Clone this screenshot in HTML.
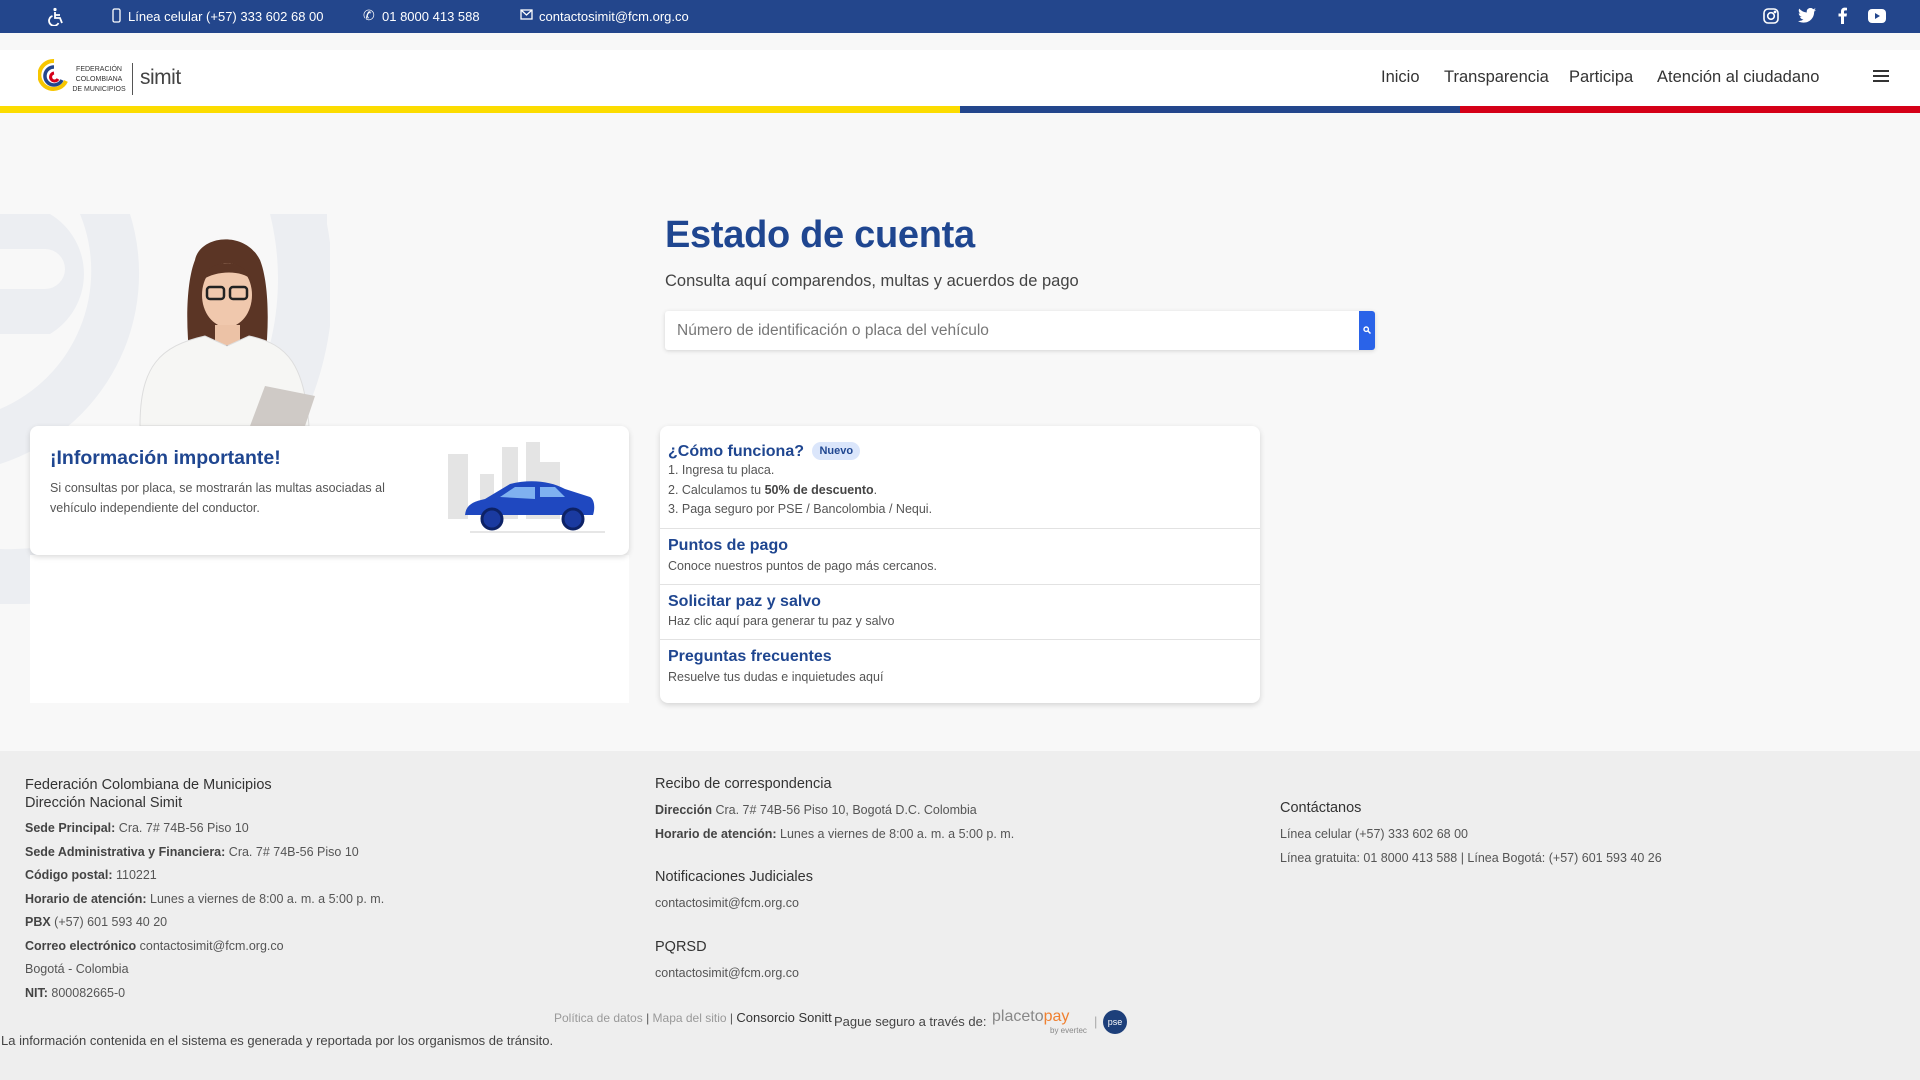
<!DOCTYPE html>
<html><head><meta charset="utf-8">
<style>
*{margin:0;padding:0;box-sizing:border-box}
body{width:1920px;height:1080px;overflow:hidden;background:#f8f8f8;font-family:"Liberation Sans",sans-serif;color:#333;position:relative}
.a{position:absolute;white-space:nowrap}
.top{position:absolute;left:0;top:0;width:1920px;height:33px;background:#23468c;color:#fff;font-size:13px}
.hdr{position:absolute;left:0;top:50px;width:1920px;height:56px;background:#fff}
.nav{font-size:16.5px;color:#333;top:68px}
.blue{color:#1f4690}
.card{position:absolute;background:#fff;border-radius:8px;box-shadow:0 2px 6px rgba(0,0,0,.15)}
.rt{font-size:16px;font-weight:bold;color:#1f4690}
.rd{font-size:12.5px;color:#555}
.f{font-size:12.5px;color:#555}
.f b{color:#444}
.fh{font-size:14.5px;color:#333}
</style></head><body>
<div class="top">
 <svg class="a" style="left:48px;top:7px" width="18" height="19" viewBox="0 0 18 19" fill="none" stroke="#fff" stroke-width="1.8"><circle cx="7" cy="2.5" r="1.6" fill="#fff" stroke="none"/><path d="M7 5v6h5l2 5M7 8h5M4.5 9a5 5 0 1 0 6 7"/></svg>
 <svg class="a" style="left:112px;top:8px" width="9" height="15" viewBox="0 0 9 15"><rect x="1" y="1" width="7" height="13" rx="1.5" fill="none" stroke="#fff" stroke-width="1.3"/></svg>
 <span class="a" style="left:128px;top:9px">Línea celular (+57) 333 602 68 00</span>
 <span class="a" style="left:363px;top:7px;font-size:14px">✆</span>
 <span class="a" style="left:382px;top:9px">01 8000 413 588</span>
 <svg class="a" style="left:520px;top:9px" width="13" height="11" viewBox="0 0 13 11"><rect x="1" y="1" width="11" height="9" fill="none" stroke="#fff" stroke-width="1.3"/><path d="M1 1l5.5 5L12 1" fill="none" stroke="#fff" stroke-width="1.3"/></svg>
 <span class="a" style="left:539px;top:9px">contactosimit@fcm.org.co</span>
 <svg class="a" style="left:1763px;top:8px" width="16" height="16" viewBox="0 0 16 16" fill="none" stroke="#fff" stroke-width="1.6"><rect x="1" y="1" width="14" height="14" rx="4"/><circle cx="8" cy="8" r="3.3"/><circle cx="12" cy="4" r=".6" fill="#fff"/></svg>
 <svg class="a" style="left:1798px;top:8px" width="18" height="15" viewBox="0 0 24 20"><path fill="#fff" d="M24 2.4a10 10 0 0 1-2.8.8A5 5 0 0 0 23.3.4a10 10 0 0 1-3.1 1.2A4.9 4.9 0 0 0 11.8 6 14 14 0 0 1 1.7.9a4.9 4.9 0 0 0 1.5 6.6A5 5 0 0 1 1 6.9a4.9 4.9 0 0 0 3.9 4.9 5 5 0 0 1-2.2.1 4.9 4.9 0 0 0 4.6 3.4A9.9 9.9 0 0 1 0 17.3 14 14 0 0 0 7.5 19.5c9.1 0 14-7.5 14-14v-.6A10 10 0 0 0 24 2.4z"/></svg>
 <svg class="a" style="left:1838px;top:7px" width="9" height="17" viewBox="0 0 9 17"><path fill="#fff" d="M6 17V9.5h2.5L9 6.5H6V4.8c0-.9.3-1.4 1.5-1.4H9V.7A20 20 0 0 0 6.8.6C4.6.6 3 1.9 3 4.4v2.1H.5v3H3V17z"/></svg>
 <svg class="a" style="left:1868px;top:9px" width="18" height="14" viewBox="0 0 18 14"><rect width="18" height="14" rx="4" fill="#fff"/><path d="M7 4l5 3-5 3z" fill="#23468c"/></svg>
</div>
<div class="hdr"></div>
<svg class="a" style="left:38px;top:57px" width="32" height="40" viewBox="0 0 30 40"><path d="M15 4a14 14 0 1 0 12 20" fill="none" stroke="#f7c600" stroke-width="4"/><path d="M15 10a9 9 0 1 0 8 13" fill="none" stroke="#23468c" stroke-width="3.5"/><path d="M15 16a4 4 0 1 0 4 6" fill="none" stroke="#d50018" stroke-width="3"/></svg>
<div class="a" style="left:72px;top:65px;font-size:7px;line-height:10px;color:#333;text-align:center;width:54px">FEDERACIÓN<br>COLOMBIANA<br>DE MUNICIPIOS</div>
<div class="a" style="left:132px;top:63px;width:1px;height:32px;background:#555"></div>
<div class="a" style="left:140px;top:66px;font-size:21px;color:#444;letter-spacing:-.5px">simit</div>
<span class="a nav" style="left:1381px">Inicio</span>
<span class="a nav" style="left:1444px">Transparencia</span>
<span class="a nav" style="left:1569px">Participa</span>
<span class="a nav" style="left:1657px">Atención al ciudadano</span>
<div class="a" style="left:1873px;top:70px;width:16px;height:2px;background:#333;box-shadow:0 5px 0 #333,0 10px 0 #333"></div>
<div class="a" style="left:0;top:106px;width:960px;height:7px;background:#fcdc00"></div>
<div class="a" style="left:960px;top:106px;width:500px;height:7px;background:#23468c"></div>
<div class="a" style="left:1460px;top:106px;width:460px;height:7px;background:#d50018"></div>

<svg class="a" style="left:0;top:214px" width="330" height="390" viewBox="0 0 330 390"><path d="M0 0h50a70 70 0 0 1 0 120H0v-45h45a20 20 0 0 0 0-40H0z" fill="#eceef2"/><path d="M80 0h50A200 200 0 0 1 0 250v-55A150 150 0 0 0 80 0z" fill="#eceef2"/><path d="M270 0h57v10A320 320 0 0 1 0 390v-55A270 270 0 0 0 270 0z" fill="#eceef2"/></svg>
<svg class="a" style="left:130px;top:230px" width="190" height="196" viewBox="0 0 190 196"><path d="M65 30c5-25 50-30 65 0 8 20 10 60 5 100H60c-5-40-3-80 5-100z" fill="#5b3525"/><ellipse cx="97" cy="65" rx="25" ry="32" fill="#f0c8ad"/><path d="M72 50c5-20 40-25 50 0-10-10-35-10-50 0z" fill="#5b3525"/><rect x="77" y="57" width="17" height="12" rx="3" fill="none" stroke="#222" stroke-width="2.5"/><rect x="100" y="57" width="17" height="12" rx="3" fill="none" stroke="#222" stroke-width="2.5"/><path d="M85 95h25v20H85z" fill="#ecc2a6"/><path d="M10 196c0-60 20-80 65-90l22 10 22-10c40 8 55 30 60 90z" fill="#f6f6f4" stroke="#ddd"/><path d="M120 196l15-40 50 10-10 30z" fill="#cfcac6"/></svg>

<div class="a blue" style="left:665px;top:214px;font-size:38px;font-weight:bold;letter-spacing:-.3px">Estado de cuenta</div>
<div class="a" style="left:665px;top:272px;font-size:16.5px;color:#444">Consulta aquí comparendos, multas y acuerdos de pago</div>
<div class="a" style="left:665px;top:311px;width:710px;height:39px;background:#fff;box-shadow:0 1px 4px rgba(0,0,0,.15);border-radius:3px"></div>
<span class="a" style="left:677px;top:322px;font-size:15.5px;color:#777">Número de identificación o placa del vehículo</span>
<div class="a" style="left:1359px;top:311px;width:16px;height:39px;background:#2a63e8;border-radius:0 3px 3px 0"></div>
<svg class="a" style="left:1363px;top:326px" width="8" height="8" viewBox="0 0 8 8"><circle cx="3.2" cy="3.2" r="2.2" fill="none" stroke="#fff" stroke-width="1.4"/><path d="M5 5l2.5 2.5" stroke="#fff" stroke-width="1.5"/></svg>

<div class="a" style="left:30px;top:555px;width:599px;height:148px;background:#fff"></div>
<div class="card" style="left:30px;top:426px;width:599px;height:129px"></div>
<div class="a blue" style="left:50px;top:447px;font-size:19.5px;font-weight:bold">¡Información importante!</div>
<div class="a" style="left:50px;top:478px;font-size:12.5px;color:#555;line-height:20px">Si consultas por placa, se mostrarán las multas asociadas al<br>vehículo independiente del conductor.</div>
<svg class="a" style="left:440px;top:442px" width="175" height="92" viewBox="0 0 175 92"><g fill="#e4e4e4"><rect x="8" y="12" width="20" height="65"/><rect x="40" y="32" width="14" height="45"/><rect x="62" y="5" width="16" height="72"/><rect x="86" y="0" width="14" height="77"/><rect x="100" y="20" width="20" height="57"/></g><path d="M30 90h135" stroke="#ccc"/><path d="M25 75c0-10 5-15 20-18l25-15c20-5 40-3 55 5l25 8c5 3 5 12 3 18H25z" fill="#1f48c0"/><path d="M60 55l15-10h20v12z M100 45h15l10 10h-25z" fill="#7fb1f0"/><circle cx="52" cy="77" r="10" fill="#1a3aa0" stroke="#0d2266" stroke-width="3"/><circle cx="133" cy="77" r="10" fill="#1a3aa0" stroke="#0d2266" stroke-width="3"/></svg>

<div class="card" style="left:660px;top:426px;width:600px;height:277px"></div>
<div class="a" style="left:660px;top:528px;width:600px;height:1px;background:#e2e2e2"></div>
<div class="a" style="left:660px;top:584px;width:600px;height:1px;background:#e2e2e2"></div>
<div class="a" style="left:660px;top:639px;width:600px;height:1px;background:#e2e2e2"></div>
<span class="a rt" style="left:668px;top:443px">¿Cómo funciona? <span style="background:#dbe6fb;color:#1f4690;font-size:11px;font-weight:bold;padding:3px 7px;border-radius:9px;margin-left:4px;vertical-align:2px">Nuevo</span></span>
<span class="a rd" style="left:668px;top:463px">1. Ingresa tu placa.</span>
<span class="a rd" style="left:668px;top:483px">2. Calculamos tu <b style="color:#444">50% de descuento</b>.</span>
<span class="a rd" style="left:668px;top:502px">3. Paga seguro por PSE / Bancolombia / Nequi.</span>
<span class="a rt" style="left:668px;top:537px">Puntos de pago</span>
<span class="a rd" style="left:668px;top:559px">Conoce nuestros puntos de pago más cercanos.</span>
<span class="a rt" style="left:668px;top:593px">Solicitar paz y salvo</span>
<span class="a rd" style="left:668px;top:614px">Haz clic aquí para generar tu paz y salvo</span>
<span class="a rt" style="left:668px;top:648px">Preguntas frecuentes</span>
<span class="a rd" style="left:668px;top:670px">Resuelve tus dudas e inquietudes aquí</span>

<div class="a" style="left:0;top:751px;width:1920px;height:329px;background:#eeeeee"></div>
<div class="a fh" style="left:25px;top:776px;line-height:18px">Federación Colombiana de Municipios<br>Dirección Nacional Simit</div>
<span class="a f" style="left:25px;top:821px"><b>Sede Principal:</b> Cra. 7# 74B-56 Piso 10</span>
<span class="a f" style="left:25px;top:845px"><b>Sede Administrativa y Financiera:</b> Cra. 7# 74B-56 Piso 10</span>
<span class="a f" style="left:25px;top:868px"><b>Código postal:</b> 110221</span>
<span class="a f" style="left:25px;top:892px"><b>Horario de atención:</b> Lunes a viernes de 8:00 a. m. a 5:00 p. m.</span>
<span class="a f" style="left:25px;top:915px"><b>PBX</b> (+57) 601 593 40 20</span>
<span class="a f" style="left:25px;top:939px"><b>Correo electrónico</b> contactosimit@fcm.org.co</span>
<span class="a f" style="left:25px;top:962px">Bogotá - Colombia</span>
<span class="a f" style="left:25px;top:986px"><b>NIT:</b> 800082665-0</span>

<span class="a fh" style="left:655px;top:776px">Recibo de correspondencia</span>
<span class="a f" style="left:655px;top:803px"><b>Dirección</b> Cra. 7# 74B-56 Piso 10, Bogotá D.C. Colombia</span>
<span class="a f" style="left:655px;top:827px"><b>Horario de atención:</b> Lunes a viernes de 8:00 a. m. a 5:00 p. m.</span>
<span class="a fh" style="left:655px;top:869px">Notificaciones Judiciales</span>
<span class="a f" style="left:655px;top:896px">contactosimit@fcm.org.co</span>
<span class="a fh" style="left:655px;top:939px">PQRSD</span>
<span class="a f" style="left:655px;top:966px">contactosimit@fcm.org.co</span>

<span class="a fh" style="left:1280px;top:800px">Contáctanos</span>
<span class="a f" style="left:1280px;top:827px">Línea celular (+57) 333 602 68 00</span>
<span class="a f" style="left:1280px;top:851px">Línea gratuita: 01 8000 413 588 | Línea Bogotá: (+57) 601 593 40 26</span>

<span class="a" style="left:554px;top:1010px;font-size:12px;color:#999">Política de datos <span style="color:#555">|</span> Mapa del sitio <span style="color:#555">|</span> <span style="color:#333;font-size:13px">Consorcio Sonitt</span></span>
<span class="a" style="left:834px;top:1014px;font-size:13px;color:#444">Pague seguro a través de:</span>
<span class="a" style="left:992px;top:1008px;font-size:16px;color:#888">placeto<span style="color:#f08030">pay</span></span>
<span class="a" style="left:1050px;top:1026px;font-size:8px;color:#888">by evertec</span>
<span class="a" style="left:1094px;top:1014px;font-size:13px;color:#aaa">|</span>
<div class="a" style="left:1103px;top:1010px;width:24px;height:24px;border-radius:50%;background:#1d3f7a;color:#fff;font-size:9px;text-align:center;line-height:24px">pse</div>
<span class="a" style="left:1px;top:1033px;font-size:13px;color:#444">La información contenida en el sistema es generada y reportada por los organismos de tránsito.</span>
</body></html>
